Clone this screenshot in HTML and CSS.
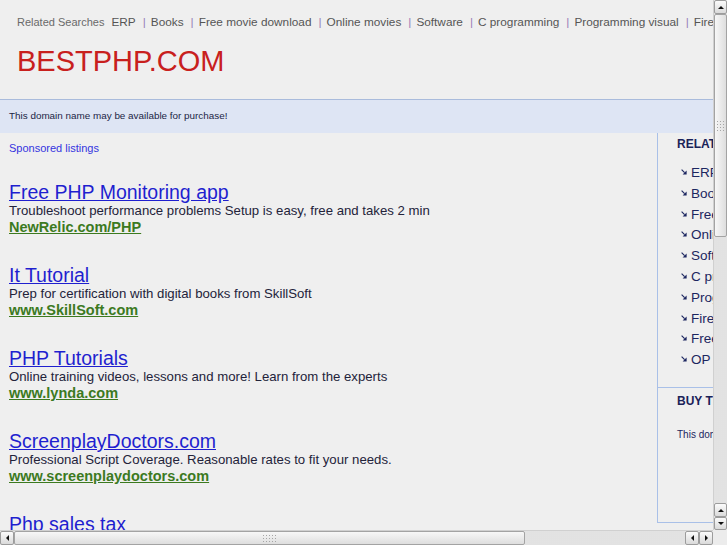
FILE: index.html
```html
<!DOCTYPE html>
<html>
<head>
<meta charset="utf-8">
<title>bestphp.com</title>
<link rel="stylesheet" href="styles.css">
</head>
<body>
<div class="window">
  <div class="viewport">
    <div class="page">
      <div class="top">
        <div class="related">
          <span class="label">Related Searches</span>
          <a>ERP</a><span class="sep">|</span>
          <a>Books</a><span class="sep">|</span>
          <a>Free movie download</a><span class="sep">|</span>
          <a>Online movies</a><span class="sep">|</span>
          <a>Software</a><span class="sep">|</span>
          <a>C programming</a><span class="sep">|</span>
          <a>Programming visual</a><span class="sep">|</span>
          <a>Firewall</a>
        </div>
        <div class="logo">BESTPHP.COM</div>
      </div>
      <div class="banner">This domain name may be available for purchase!</div>
      <div class="content">
        <div class="main">
          <div class="sponsored">Sponsored listings</div>
          <div class="ads">
            <div class="ad">
              <a class="ad-title">Free PHP Monitoring app</a>
              <div class="ad-desc">Troubleshoot performance problems Setup is easy, free and takes 2 min</div>
              <a class="ad-url">NewRelic.com/PHP</a>
            </div>
            <div class="ad">
              <a class="ad-title">It Tutorial</a>
              <div class="ad-desc">Prep for certification with digital books from SkillSoft</div>
              <a class="ad-url">www.SkillSoft.com</a>
            </div>
            <div class="ad">
              <a class="ad-title">PHP Tutorials</a>
              <div class="ad-desc">Online training videos, lessons and more! Learn from the experts</div>
              <a class="ad-url">www.lynda.com</a>
            </div>
            <div class="ad">
              <a class="ad-title">ScreenplayDoctors.com</a>
              <div class="ad-desc">Professional Script Coverage. Reasonable rates to fit your needs.</div>
              <a class="ad-url">www.screenplaydoctors.com</a>
            </div>
            <div class="ad">
              <a class="ad-title">Php sales tax</a>
              <div class="ad-desc">Calculate sales tax rates for every state and city</div>
              <a class="ad-url">www.avalara.com</a>
            </div>
          </div>
        </div>
        <div class="aside">
          <div class="aside-sec">
            <div class="aside-head">RELATED SEARCHES</div>
            <ul class="rel-list">
              <li><svg class="arr" width="6" height="6" viewBox="0 0 6 6"><path d="M0.6 0.6 L3.6 3.6" stroke="#1c2660" stroke-width="1.1"/><path d="M5.6 1.6 V5.6 H1.6 Z" fill="#1c2660"/></svg>ERP</li>
              <li><svg class="arr" width="6" height="6" viewBox="0 0 6 6"><path d="M0.6 0.6 L3.6 3.6" stroke="#1c2660" stroke-width="1.1"/><path d="M5.6 1.6 V5.6 H1.6 Z" fill="#1c2660"/></svg>Books</li>
              <li><svg class="arr" width="6" height="6" viewBox="0 0 6 6"><path d="M0.6 0.6 L3.6 3.6" stroke="#1c2660" stroke-width="1.1"/><path d="M5.6 1.6 V5.6 H1.6 Z" fill="#1c2660"/></svg>Free movie download</li>
              <li><svg class="arr" width="6" height="6" viewBox="0 0 6 6"><path d="M0.6 0.6 L3.6 3.6" stroke="#1c2660" stroke-width="1.1"/><path d="M5.6 1.6 V5.6 H1.6 Z" fill="#1c2660"/></svg>Online movies</li>
              <li><svg class="arr" width="6" height="6" viewBox="0 0 6 6"><path d="M0.6 0.6 L3.6 3.6" stroke="#1c2660" stroke-width="1.1"/><path d="M5.6 1.6 V5.6 H1.6 Z" fill="#1c2660"/></svg>Software</li>
              <li><svg class="arr" width="6" height="6" viewBox="0 0 6 6"><path d="M0.6 0.6 L3.6 3.6" stroke="#1c2660" stroke-width="1.1"/><path d="M5.6 1.6 V5.6 H1.6 Z" fill="#1c2660"/></svg>C programming</li>
              <li><svg class="arr" width="6" height="6" viewBox="0 0 6 6"><path d="M0.6 0.6 L3.6 3.6" stroke="#1c2660" stroke-width="1.1"/><path d="M5.6 1.6 V5.6 H1.6 Z" fill="#1c2660"/></svg>Programming visual</li>
              <li><svg class="arr" width="6" height="6" viewBox="0 0 6 6"><path d="M0.6 0.6 L3.6 3.6" stroke="#1c2660" stroke-width="1.1"/><path d="M5.6 1.6 V5.6 H1.6 Z" fill="#1c2660"/></svg>Firewall</li>
              <li><svg class="arr" width="6" height="6" viewBox="0 0 6 6"><path d="M0.6 0.6 L3.6 3.6" stroke="#1c2660" stroke-width="1.1"/><path d="M5.6 1.6 V5.6 H1.6 Z" fill="#1c2660"/></svg>Free software</li>
              <li><svg class="arr" width="6" height="6" viewBox="0 0 6 6"><path d="M0.6 0.6 L3.6 3.6" stroke="#1c2660" stroke-width="1.1"/><path d="M5.6 1.6 V5.6 H1.6 Z" fill="#1c2660"/></svg>OP</li>
            </ul>
          </div>
          <div class="aside-sec buy">
            <div class="aside-head">BUY THIS DOMAIN</div>
            <div class="buy-text">This domain name may be available for purchase!</div>
          </div>
        </div>
      </div>
    </div>
  </div>

  <div class="vscroll">
    <div class="btn up"><span class="tri-up"></span></div>
    <div class="vthumb"><span class="grip"></span></div>
    <div class="track"></div>
    <div class="btn up"><span class="tri-up"></span></div>
    <div class="btn down"><span class="tri-down"></span></div>
  </div>

  <div class="hscroll">
    <div class="btn hbtn"><span class="tri-left"></span></div>
    <div class="hthumb"><span class="grip"></span></div>
    <div class="track"></div>
    <div class="btn hbtn"><span class="tri-left"></span></div>
    <div class="btn hbtn"><span class="tri-right"></span></div>
  </div>

  <div class="corner"></div>
</div>
</body>
</html>
```

FILE: styles.css
```css
html, body {
  margin: 0;
  padding: 0;
  background: #eeeeee;
  font-family: "Liberation Sans", Arial, sans-serif;
  overflow: hidden;
}

.window {
  display: grid;
  grid-template-columns: 713px 14px;
  grid-template-rows: 530px 15px;
  width: 727px;
  height: 545px;
}

.viewport {
  overflow: hidden;
  background: #efefef;
}

.page {
  width: 900px;
}

/* header */
.top {
  height: 100px;
  box-sizing: border-box;
  padding: 15px 0 0 17px;
  border-bottom: 1px solid #a9bbdc;
}

.related {
  display: flex;
  align-items: baseline;
  white-space: nowrap;
  font-size: 11.8px;
  line-height: 14px;
  color: #555555;
}

.related .label {
  font-size: 11px;
  color: #6a6a6a;
  margin-right: 7px;
}

.related .sep {
  color: #9a7fb8;
  margin: 0 5px 0 7px;
}

.logo {
  margin-top: 16px;
  font-size: 29px;
  line-height: 32px;
  color: #c8201d;
}

/* banner */
.banner {
  height: 33px;
  display: flex;
  align-items: center;
  padding-left: 9px;
  padding-bottom: 2px;
  box-sizing: border-box;
  background: #dee5f4;
  font-size: 9.9px;
  color: #1b1f45;
}

/* content */
.content {
  display: flex;
  align-items: flex-start;
}

.main {
  width: 648px;
  padding: 9px 0 0 9px;
}

.sponsored {
  font-size: 11px;
  line-height: 13px;
  color: #3434e0;
}

.ads {
  margin-top: 27px;
  display: flex;
  flex-direction: column;
  gap: 30px;
}

.ad {
  display: flex;
  flex-direction: column;
  align-items: flex-start;
  white-space: nowrap;
}

.ad-title {
  font-size: 19.5px;
  line-height: 20px;
  color: #1f1fcf;
  text-decoration: underline;
}

.ad-desc {
  font-size: 13.2px;
  line-height: 17px;
  color: #23233a;
}

.ad-url {
  font-size: 14.5px;
  line-height: 16px;
  font-weight: bold;
  color: #3c7a1f;
  text-decoration: underline;
}

/* right column */
.aside {
  width: 220px;
  height: 390px;
  box-sizing: border-box;
  border-left: 1px solid #a9c0e8;
  border-bottom: 1px solid #a9c0e8;
  color: #1c2660;
  white-space: nowrap;
}

.aside-sec {
  padding: 4px 0 0 19px;
}

.aside-head {
  font-size: 12px;
  line-height: 14px;
  font-weight: bold;
  color: #1a2258;
}

.rel-list {
  list-style: none;
  margin: 12px 0 16px 0;
  padding: 0 0 0 4px;
}

.rel-list li {
  font-size: 13.5px;
  line-height: 20.8px;
  display: flex;
  align-items: flex-start;
}

.arr {
  margin: 6px 4px 0 0;
  flex: none;
}

.buy {
  border-top: 1px solid #a9c0e8;
  padding-top: 6px;
}

.buy-text {
  margin-top: 21px;
  font-size: 10px;
  line-height: 12px;
}

/* scrollbars */
.vscroll {
  display: flex;
  flex-direction: column;
  background: #e9e9e9;
  border-left: 1px solid #d0d0d0;
  box-sizing: border-box;
}

.hscroll {
  display: flex;
  background: #e9e9e9;
  border-top: 1px solid #d0d0d0;
  box-sizing: border-box;
}

.corner {
  background: #ececec;
}

.track {
  flex: 1;
  background-color: #ececec;
  background-image: radial-gradient(circle, #d6d6d6 0.6px, transparent 0.8px);
  background-size: 2px 2px;
}

.btn {
  flex: none;
  box-sizing: border-box;
  border: 1px solid #9c9c9c;
  border-radius: 2px;
  background: linear-gradient(#fbfbfb, #dadada);
  display: flex;
  align-items: center;
  justify-content: center;
}

.vscroll .btn {
  height: 14px;
}

.vscroll .btn.down {
  height: 13px;
}

.hbtn {
  width: 14px;
}

.tri-up, .tri-down, .tri-left, .tri-right {
  width: 0;
  height: 0;
  display: block;
}

.tri-up {
  border-left: 3px solid transparent;
  border-right: 3px solid transparent;
  border-bottom: 3px solid #111;
}

.tri-down {
  border-left: 3px solid transparent;
  border-right: 3px solid transparent;
  border-top: 3px solid #111;
}

.tri-left {
  border-top: 3px solid transparent;
  border-bottom: 3px solid transparent;
  border-right: 3px solid #111;
}

.tri-right {
  border-top: 3px solid transparent;
  border-bottom: 3px solid transparent;
  border-left: 3px solid #111;
}

.vthumb {
  height: 223px;
  flex: none;
  box-sizing: border-box;
  border: 1px solid #a3a3a3;
  border-radius: 2px;
  background: linear-gradient(90deg, #f7f7f7, #dedede);
  display: flex;
  align-items: center;
  justify-content: center;
}

.hthumb {
  width: 511px;
  flex: none;
  box-sizing: border-box;
  border: 1px solid #a3a3a3;
  border-radius: 2px;
  background: linear-gradient(#f7f7f7, #dedede);
  display: flex;
  align-items: center;
  justify-content: center;
}

.grip {
  display: block;
  width: 9px;
  height: 12px;
  background-image: radial-gradient(circle, #a5a5a5 0.8px, transparent 1px);
  background-size: 3px 3px;
}

.hthumb .grip {
  width: 15px;
  height: 9px;
}
```
